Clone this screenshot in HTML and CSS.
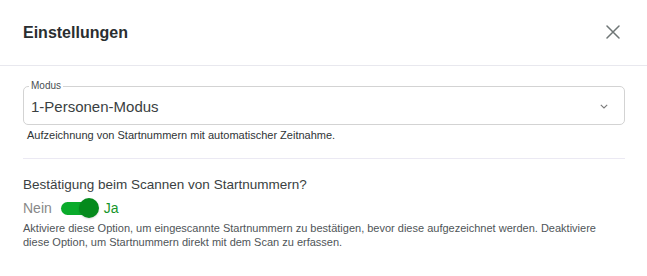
FILE: index.html
```html
<!DOCTYPE html>
<html lang="de">
<head>
<meta charset="utf-8">
<title>Einstellungen</title>
<link rel="stylesheet" href="styles.css">
</head>
<body>
<div class="dialog">
  <header class="dialog-header">
    <h1 class="dialog-title">Einstellungen</h1>
    <button class="close-btn" aria-label="Schließen">
      <svg width="14" height="14" viewBox="0 0 14 14"><path d="M1 1 L13 13 M13 1 L1 13" stroke="#6f7676" stroke-width="1.5" fill="none" stroke-linecap="round"/></svg>
    </button>
  </header>
  <div class="dialog-body">
    <div class="field">
      <div class="select">
        <span class="select-label">Modus</span>
        <span class="select-value">1-Personen-Modus</span>
        <svg class="chevron" width="8" height="5" viewBox="0 0 8 5"><path d="M0.8 0.8 L4 4 L7.2 0.8" stroke="#7a7a7a" stroke-width="1.1" fill="none"/></svg>
      </div>
      <p class="hint">Aufzeichnung von Startnummern mit automatischer Zeitnahme.</p>
    </div>
    <hr class="divider">
    <div class="field">
      <p class="question">Bestätigung beim Scannen von Startnummern?</p>
      <div class="toggle-row">
        <span class="off-label">Nein</span>
        <span class="switch"><span class="track"></span><span class="knob"></span></span>
        <span class="on-label">Ja</span>
      </div>
      <p class="desc">Aktiviere diese Option, um eingescannte Startnummern zu bestätigen, bevor diese aufgezeichnet werden. Deaktiviere diese Option, um Startnummern direkt mit dem Scan zu erfassen.</p>
    </div>
  </div>
</div>
</body>
</html>
```
FILE: styles.css
```css
* { box-sizing: border-box; }
html, body { margin: 0; padding: 0; background: #fff; }
body { font-family: "Liberation Sans", Arial, Helvetica, sans-serif; color: #3a3f42; }

.dialog { width: 647px; }

.dialog-header {
  height: 66px;
  display: flex;
  align-items: center;
  justify-content: space-between;
  padding: 0 27px 0 23px;
  border-bottom: 1px solid #e8e8ee;
}
.dialog-title {
  margin: 0;
  font-size: 16px;
  font-weight: bold;
  color: #2a2e30;
}
.close-btn {
  border: 0;
  background: none;
  padding: 0;
  width: 14px;
  height: 14px;
  display: flex;
  cursor: pointer;
  margin-top: -2px;
}

.dialog-body { padding: 20px 22px 0 23px; }

.select {
  position: relative;
  height: 39px;
  border: 1px solid #d3d3d3;
  border-radius: 5px;
  display: flex;
  align-items: center;
  padding: 0 16px 0 7px;
}
.select-label {
  position: absolute;
  top: -7px;
  left: 5px;
  padding: 0 2px;
  background: #fff;
  font-size: 10px;
  line-height: 12px;
  color: #4a4f52;
}
.select-value {
  flex: 1;
  font-size: 15px;
  color: #3a3f42;
  padding-top: 1px;
}
.chevron { display: block; margin-top: 2px; }

.hint {
  margin: 3px 0 0 4px;
  font-size: 11px;
  line-height: 14px;
  color: #2f3436;
}

.divider {
  border: 0;
  border-top: 1px solid #ebe9f3;
  margin: 16px 0 17px;
}

.question {
  margin: 0;
  font-size: 13.5px;
  line-height: 18px;
  color: #3a3f42;
}
.toggle-row {
  display: flex;
  align-items: center;
  height: 22px;
  margin-top: 3px;
}
.off-label { font-size: 14px; color: #888; }
.on-label { font-size: 14px; color: #16952a; margin-left: 5px; }
.switch {
  position: relative;
  width: 38px;
  height: 20px;
  margin-left: 9px;
  display: flex;
  align-items: center;
}
.track {
  display: block;
  width: 35px;
  height: 13px;
  border-radius: 7px;
  background: #0aab2b;
}
.knob {
  position: absolute;
  right: 0;
  top: 0;
  width: 20px;
  height: 20px;
  border-radius: 50%;
  background: #058a1c;
  box-shadow: 0 1px 2px rgba(0,0,0,0.15);
}

.desc {
  margin: 2px 0 0;
  font-size: 11px;
  line-height: 14px;
  color: #4f5558;
}
```
